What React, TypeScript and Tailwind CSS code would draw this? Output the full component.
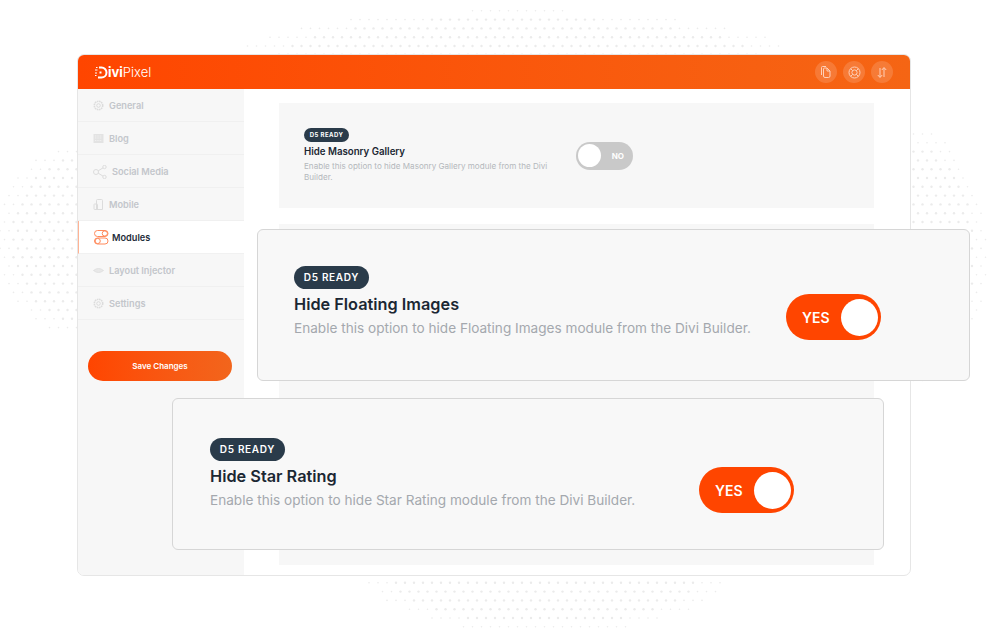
import React from "react";

function Dots() {
  const blobs = [
    { cx: 515, cy: 62, rx: 285, ry: 52 },
    { cx: 80, cy: 240, rx: 82, ry: 95 },
    { cx: 905, cy: 255, rx: 82, ry: 130 },
    { cx: 545, cy: 572, rx: 180, ry: 62 },
  ];
  const dots: React.ReactElement[] = [];
  for (let r = 0; r < 72; r++) {
    for (let c = 0; c < 112; c++) {
      const x = c * 9 + (r % 2 ? 4.5 : 0);
      const y = r * 8.8 + 2;
      let d = 9;
      for (const b of blobs) {
        d = Math.min(d, ((x - b.cx) / b.rx) ** 2 + ((y - b.cy) / b.ry) ** 2);
      }
      if (d < 1) {
        dots.push(<circle key={r + "-" + c} cx={x} cy={y} r={d > 0.75 ? 0.8 : 1.2} fill="#ebebeb" />);
      }
    }
  }
  return (
    <svg className="absolute left-0 top-0" width="1000" height="638" viewBox="0 0 1000 638">
      {dots}
    </svg>
  );
}

function Badge({ big }: { big?: boolean }) {
  return big ? (
    <span className="inline-flex h-[23px] w-[75px] items-center justify-center rounded-full bg-[#2a3b4a] text-[10px] font-semibold tracking-[0.7px] text-white">
      D5 READY
    </span>
  ) : (
    <span className="inline-flex h-[14px] w-[45px] items-center justify-center rounded-full bg-[#2a3b4a] text-[6px] font-bold tracking-[0.45px] text-white">
      D5 READY
    </span>
  );
}

function YesToggle() {
  return (
    <div className="flex h-[46px] w-[95px] shrink-0 items-center justify-between rounded-full bg-[#ff4500] pl-[16px] pr-[3px]">
      <span className="text-[14px] font-semibold text-white">YES</span>
      <span className="h-[37px] w-[37px] rounded-full bg-white" />
    </div>
  );
}

function FloatCard({ title, text, cls }: { title: string; text: string; cls: string }) {
  return (
    <div className={"absolute flex h-[152px] flex-col items-start rounded-[6px] border border-[#d6d6d6] bg-[#f8f8f8] " + cls}>
      <Badge big />
      <div className="mt-[3px] text-[16.3px] leading-[24px] font-semibold text-[#1b2733]">{title}</div>
      <div className="mt-[2px] text-[13.6px] leading-[20px] text-[#a4a8ae]">{text}</div>
    </div>
  );
}

const G = { fill: "none", stroke: "#dcdcdc", strokeWidth: 1 };

function GearIcon() {
  return (
    <svg width="11" height="11" viewBox="0 0 11 11" {...G}>
      <circle cx="5.5" cy="5.5" r="1.8" />
      <circle cx="5.5" cy="5.5" r="4.2" strokeDasharray="1.6 0.6" strokeWidth="1.6" />
    </svg>
  );
}
function BlogIcon() {
  return (
    <svg width="11" height="11" viewBox="0 0 11 11">
      <rect x="0.5" y="1" width="10" height="9" fill="#e3e3e3" />
      <path d="M2 3h7M2 5h7M2 7.5h7" stroke="#f0f0f0" strokeWidth="1" strokeDasharray="1 0.7" />
    </svg>
  );
}
function ShareIcon() {
  return (
    <svg width="14" height="14" viewBox="0 0 14 14" {...G}>
      <circle cx="3" cy="7" r="2.5" />
      <circle cx="11.5" cy="2" r="1.7" />
      <circle cx="11.5" cy="12" r="1.7" />
      <path d="M5.2 5.8 10 2.9M5.2 8.2 10 11.1" />
    </svg>
  );
}
function MobileIcon() {
  return (
    <svg width="11" height="11" viewBox="0 0 11 11" {...G}>
      <path d="M3.5 1.5 Q3.5 .5 4.5 .5H8.5Q9.5 .5 9.5 1.5V10.5H3.5Z" />
      <rect x="1" y="5" width="3.5" height="5.5" rx="0.5" />
    </svg>
  );
}
function LayoutIcon() {
  return (
    <svg width="11" height="11" viewBox="0 0 11 11">
      <path d="M.5 5.5Q5.5 1.5 10.5 5.5Q5.5 9.5 .5 5.5Z" fill="#e8e8e8" stroke="#dcdcdc" strokeWidth="0.8" />
    </svg>
  );
}
function ToggleIcon() {
  return (
    <svg width="15" height="15" viewBox="0 0 15 15" fill="none" stroke="#ff8a5c" strokeWidth="1">
      <rect x="0.5" y="0.5" width="13.5" height="6" rx="3" />
      <circle cx="10.8" cy="3.5" r="2.6" />
      <rect x="0.5" y="8" width="13.5" height="6" rx="3" />
      <circle cx="3.7" cy="11" r="2.6" />
    </svg>
  );
}

const menu = [
  { label: "General", icon: <GearIcon />, gap: "ml-[5px]" },
  { label: "Blog", icon: <BlogIcon />, gap: "ml-[5px]" },
  { label: "Social Media", icon: <ShareIcon />, gap: "ml-[5px]" },
  { label: "Mobile", icon: <MobileIcon />, gap: "ml-[5px]" },
  { label: "Modules", icon: <ToggleIcon />, gap: "ml-[3px]" },
  { label: "Layout Injector", icon: <LayoutIcon />, gap: "ml-[5px]" },
  { label: "Settings", icon: <GearIcon />, gap: "ml-[5px]" },
];

function HeaderButton({ children }: { children: React.ReactNode }) {
  return (
    <div className="flex h-[22px] w-[22px] items-center justify-center rounded-full bg-white/15">
      {children}
    </div>
  );
}

function Logo() {
  return (
    <div className="flex items-center text-[13px] leading-none text-white">
      <svg width="13" height="13" viewBox="0 0 13 13" fill="none" stroke="#fff">
        <path d="M4 1.5h2.5a5 5 0 0 1 0 10H3" strokeWidth="2" />
        <path d="M4.5 6.5h2" strokeWidth="2" />
        <path d="M1 1.5h1.5M0 4h2.5M0 7h2M0 9.5h1.5" strokeWidth="1" />
      </svg>
      <span className="font-bold">ivi</span>
      <span className="font-light">Pixel</span>
    </div>
  );
}

export default function App() {
  const ic = { fill: "none", stroke: "#ffd0b8", strokeWidth: 1 };
  return (
    <div className="relative h-[638px] w-[1000px] overflow-hidden bg-white font-['Inter',sans-serif]">
      <Dots />
      <div className="relative ml-[77px] mt-[54px] flex h-[522px] w-[834px] flex-col overflow-hidden rounded-[7px] border border-[#e6e6e6] bg-white">
        <div className="flex h-[34px] shrink-0 items-center justify-between bg-gradient-to-r from-[#ff4500] to-[#f56514] pl-[17px] pr-[17px]">
          <Logo />
          <div className="flex gap-[6px]">
            <HeaderButton>
              <svg width="12" height="12" viewBox="0 0 12 12" {...ic}>
                <path d="M1.5 9V1.5Q1.5 .5 2.5 .5H6" />
                <path d="M3.5 10V3Q3.5 2 4.5 2H7L10 5V10Q10 11.5 8.5 11.5H5Q3.5 11.5 3.5 10Z" />
                <path d="M7 2V5H10" />
              </svg>
            </HeaderButton>
            <HeaderButton>
              <svg width="13" height="13" viewBox="0 0 13 13" {...ic}>
                <circle cx="6.5" cy="6.5" r="5.5" />
                <circle cx="6.5" cy="6.5" r="2.6" />
                <path d="M2.6 2.6 4.7 4.7M10.4 2.6 8.3 4.7M2.6 10.4 4.7 8.3M10.4 10.4 8.3 8.3" />
              </svg>
            </HeaderButton>
            <HeaderButton>
              <svg width="12" height="13" viewBox="0 0 12 13" {...ic}>
                <path d="M8 11V2M5.8 4 8 1.5 10.2 4" />
                <path d="M4 2V11M1.8 9 4 11.5 6.2 9" />
              </svg>
            </HeaderButton>
          </div>
        </div>
        <div className="flex min-h-0 flex-1">
          <div className="flex w-[166px] shrink-0 flex-col bg-[#f7f7f7]">
            {menu.map(({ label, icon, gap }) => {
              const active = label === "Modules";
              return (
                <div
                  key={label}
                  className={
                    active
                      ? "flex h-[33px] shrink-0 items-center border-b border-l border-[#f1f1f1] border-l-[#ffb394] bg-white pl-[15px] pt-[1px]"
                      : "flex h-[33px] shrink-0 items-center border-b border-[#f0f0f0] pl-[15px] pt-[1px]"
                  }
                >
                  {icon}
                  <span className={(active ? "text-[#1f2d3a] " : "text-[#c3c6cb] ") + "text-[9.2px] font-semibold " + gap}>
                    {label}
                  </span>
                </div>
              );
            })}
            <div className="ml-[10px] mr-[12px] mt-[31px] flex h-[30px] items-center justify-center rounded-full bg-gradient-to-r from-[#ff4500] to-[#f2651c] text-[8px] font-semibold text-white">
              Save Changes
            </div>
          </div>
          <div className="flex min-w-0 flex-1 flex-col gap-[16px] pl-[35px] pr-[36px] pt-[14px]">
            <div className="flex h-[105px] shrink-0 items-center bg-[#f7f7f7] pl-[25px]">
              <div className="flex w-[248px] flex-col items-start">
                <Badge />
                <div className="mt-[3px] text-[9.7px] leading-[14px] font-semibold text-[#1b2733]">Hide Masonry Gallery</div>
                <div className="mt-[2px] text-[8.1px] leading-[11.5px] text-[#b4b7bc]">
                  Enable this option to hide Masonry Gallery module from the Divi Builder.
                </div>
              </div>
              <div className="ml-[24px] flex h-[28px] w-[57px] items-center justify-between rounded-full bg-[#c9c9c9] pl-[2px] pr-[9px]">
                <span className="h-[23px] w-[23px] rounded-full bg-white" />
                <span className="text-[8px] font-bold text-white">NO</span>
              </div>
            </div>
            <div className="h-[341px] shrink-0 bg-[#f7f7f7]" />
          </div>
        </div>
      </div>
      <FloatCard
        cls="left-[257px] top-[229px] w-[713px] pl-[36px] pt-[36px]"
        title="Hide Floating Images"
        text="Enable this option to hide Floating Images module from the Divi Builder."
      />
      <div className="absolute left-[786px] top-[294px]"><YesToggle /></div>
      <FloatCard
        cls="left-[172px] top-[398px] w-[712px] pl-[37px] pt-[39px]"
        title="Hide Star Rating"
        text="Enable this option to hide Star Rating module from the Divi Builder."
      />
      <div className="absolute left-[699px] top-[467px]"><YesToggle /></div>
    </div>
  );
}
